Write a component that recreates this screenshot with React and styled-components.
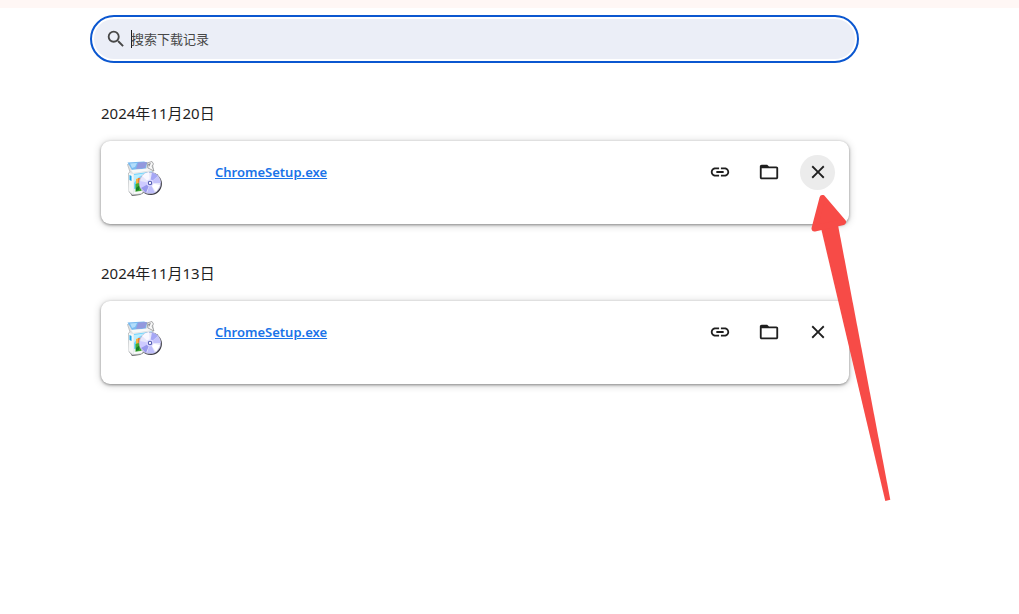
import React, { useState } from 'react';
import styled, { createGlobalStyle } from 'styled-components';

const GlobalStyle = createGlobalStyle`
  *, *::before, *::after { box-sizing: border-box; }
  body {
    margin: 0;
    background: #fff;
    color: #1f1f1f;
    font-family: "Noto Sans", "Noto Sans CJK SC", sans-serif;
  }
`;

const Page = styled.div`
  position: relative;
  min-height: 100vh;
  overflow: hidden;
`;

const Banner = styled.div`
  height: 8px;
  background: #fff7f5;
`;

const Content = styled.main`
  padding: 7px 160px 40px 90px;
`;

const SearchBox = styled.label`
  display: flex;
  align-items: center;
  height: 48px;
  padding: 0 24px 0 13px;
  border: 2px solid #0b57d0;
  border-radius: 24px;
  background: #ebeef7;
  box-shadow: inset 0 0 0 2px #fff;
  color: #474747;
`;

const Caret = styled.span`
  width: 1px;
  height: 18px;
  margin: 0 -1px 0 4px;
  background: #1f1f1f;
`;

const SearchInput = styled.input`
  flex: 1;
  min-width: 0;
  padding: 0;
  border: 0;
  outline: 0;
  background: transparent;
  color: #1f1f1f;
  font: 13px/20px "Noto Sans CJK SC", sans-serif;
  &::placeholder { color: #474747; opacity: 1; }
`;

const Group = styled.section`
  padding: 0 0 0 11px;
  margin-top: 38px;
  & + & { margin-top: 37px; }
`;

const DateHeading = styled.h2`
  margin: 0 0 16px;
  font-size: 15px;
  font-weight: 400;
  line-height: 24px;
`;

const Card = styled.article`
  display: flex;
  align-items: flex-start;
  height: 83px;
  margin-right: 10px;
  padding: 14px 14px 0 26px;
  border-radius: 9px;
  background: #fff;
  box-shadow: 0 1px 3px rgba(0, 0, 0, 0.4), 0 1px 8px rgba(0, 0, 0, 0.2);
`;

const FileIcon = styled.svg`
  flex: none;
  width: 36px;
  height: 36px;
  margin: 6px 52px 0 0;
`;

const FileLink = styled.a`
  margin-top: 7px;
  color: #1a73e8;
  font-size: 13px;
  font-weight: 600;
  line-height: 20px;
  text-decoration: underline;
`;

const Actions = styled.div`
  display: flex;
  gap: 14px;
  margin-left: auto;
`;

const IconButton = styled.button`
  width: 35px;
  height: 35px;
  padding: 6px 6px 7px 7px;
  border: 0;
  border-radius: 50%;
  background: ${({ $active }) => ($active ? '#ececec' : 'transparent')};
  color: #1f1f1f;
  cursor: pointer;
`;

const Glyph = styled.svg`
  display: block;
  flex: none;
  width: 22px;
  height: 22px;
  fill: currentColor;
`;

const Pointer = styled.svg`
  position: absolute;
  top: 190px;
  left: 806px;
  width: 90px;
  height: 316px;
  pointer-events: none;
`;

const paths = {
  search:
    'M15.5 14h-.79l-.28-.27A6.47 6.47 0 0 0 16 9.5 6.5 6.5 0 1 0 9.5 16c1.61 0 3.09-.59 4.23-1.57l.27.28v.79l5 4.99L20.49 19l-4.99-5zm-6 0C7.01 14 5 11.99 5 9.5S7.01 5 9.5 5 14 7.01 14 9.5 11.99 14 9.5 14z',
  link:
    'M3.9 12c0-1.71 1.39-3.1 3.1-3.1h4V7H7c-2.76 0-5 2.24-5 5s2.24 5 5 5h4v-1.9H7c-1.71 0-3.1-1.39-3.1-3.1zM8 13h8v-2H8v2zm9-6h-4v1.9h4c1.71 0 3.1 1.39 3.1 3.1s-1.39 3.1-3.1 3.1h-4V17h4c2.76 0 5-2.24 5-5s-2.24-5-5-5z',
  folder:
    'M20 6h-8l-2-2H4c-1.1 0-2 .9-2 2v12c0 1.1.9 2 2 2h16c1.1 0 2-.9 2-2V8c0-1.1-.9-2-2-2zm0 12H4V8h16v10z',
  close:
    'M19 6.41 17.59 5 12 10.59 6.41 5 5 6.41 10.59 12 5 17.59 6.41 19 12 13.41 17.59 19 19 17.59 13.41 12z',
};

function Icon({ name }) {
  return (
    <Glyph viewBox="0 0 24 24" aria-hidden="true">
      <path d={paths[name]} />
    </Glyph>
  );
}

function InstallerIcon() {
  return (
    <FileIcon viewBox="0 0 36 36" aria-hidden="true">
      <path d="M2 30l3 5 8-1 5-3-13-3z" fill="#555" />
      <circle cx="23.700" cy="22.800" r="11.200" fill="#34343c" />
      <path d="M.5 3.500 3 11 1.500 12l.5 19L5.500 34l9-1 10-22 2-1-1-8z" fill="#e0e2e3" stroke="#a5a9ac" strokeWidth=".6" />
      <path d="M.5 1.500 17 .5l3 1-1 6L5 9z" fill="#78baf0" />
      <path d="M3 2.500 10 2 8 6 5 7z" fill="#b2ddfb" />
      <path d="M11 1.500l9-.5-2 6-9 1z" fill="#9499dd" />
      <path d="M4 9 21 7.500 26 9 6 12z" fill="#f8f8f8" />
      <path d="M20 2 25 .5 26.500 3l-1.500 2 2 5-6-3z" fill="#f8f8f8" stroke="#8c8c8e" strokeWidth=".7" />
      <path d="M21 3l3-1-2 4z" fill="#8d8f96" />
      <path d="M2 12l4 1v20l-4-3z" fill="#f5f6f6" />
      <path d="M2.500 14l2 1v5l-2-1z" fill="#1aa3e8" />
      <path d="M6 12.500 25 10v20L6 33z" fill="#e8edf0" />
      <path d="M7 13 25 10.500v14L7 28z" fill="#72d2fb" />
      <path d="M7 14 20 12 12 16l-5 6z" fill="#b9eeff" />
      <path d="M9 18l3-1v6l-3 1z" fill="#f3b43c" />
      <path d="M11 17h4v5l-4 1z" fill="#ef7b33" />
      <path d="M8.500 23l6-2v9l-6 1z" fill="#42ad32" />
      <path d="M9 27l4-3-1 5-3 1z" fill="#157e24" />
      <path d="M7 31l8-1v2l-8 1z" fill="#fafafa" />
      <circle cx="23" cy="22" r="10.800" fill="#e6e6fb" stroke="#a9a7c5" strokeWidth=".7" />
      <path d="M23 22 15 15a11 11 0 0 1 7-4z" fill="#f9f8ff" />
      <path d="M23 22 25 11.500a11 11 0 0 1 6 3.500z" fill="#a5a7f5" />
      <path d="M23 22 31 15l3 7z" fill="#c3c2fa" />
      <path d="M23 22 13 20a10 10 0 0 0 2 8z" fill="#cdcaff" />
      <path d="M23 22 14 27l5 5z" fill="#9798ed" />
      <path d="M23 22 20 32h8z" fill="#bebdfa" />
      <path d="M23 22 33 24l-4 7z" fill="#fff" />
      <circle cx="23" cy="22" r="3.400" fill="#dcdaff" />
      <circle cx="23" cy="22" r="1.700" fill="#fff" stroke="#535cb0" strokeWidth="1.100" />
    </FileIcon>
  );
}

const downloads = [
  { date: '2024年11月20日', file: 'ChromeSetup.exe', active: true },
  { date: '2024年11月13日', file: 'ChromeSetup.exe', active: false },
];

function DownloadGroup({ date, file, active }) {
  return (
    <Group>
      <DateHeading>{date}</DateHeading>
      <Card>
        <InstallerIcon />
        <FileLink href="#">{file}</FileLink>
        <Actions>
          <IconButton type="button" aria-label="复制下载链接"><Icon name="link" /></IconButton>
          <IconButton type="button" aria-label="在文件夹中显示"><Icon name="folder" /></IconButton>
          <IconButton type="button" aria-label="从列表中移除" $active={active}><Icon name="close" /></IconButton>
        </Actions>
      </Card>
    </Group>
  );
}

export default function App() {
  const [query, setQuery] = useState('');
  return (
    <Page>
      <GlobalStyle />
      <Banner />
      <Content>
        <SearchBox>
          <Icon name="search" />
          <Caret />
          <SearchInput
            type="text"
            aria-label="搜索下载记录"
            placeholder="搜索下载记录"
            value={query}
            onChange={(e) => setQuery(e.target.value)}
          />
        </SearchBox>
        {downloads.map((item) => (
          <DownloadGroup key={item.date} {...item} />
        ))}
      </Content>
      <Pointer viewBox="0 0 90 316" aria-hidden="true">
        <g fill="#f74b47">
          <path d="M15 38 32 35 84.300 309.700 79.300 311z" />
          <path
            d="M16.500 8 37 32 8.500 38.500z"
            stroke="#f74b47"
            strokeWidth="6"
            strokeLinejoin="round"
          />
        </g>
      </Pointer>
    </Page>
  );
}
